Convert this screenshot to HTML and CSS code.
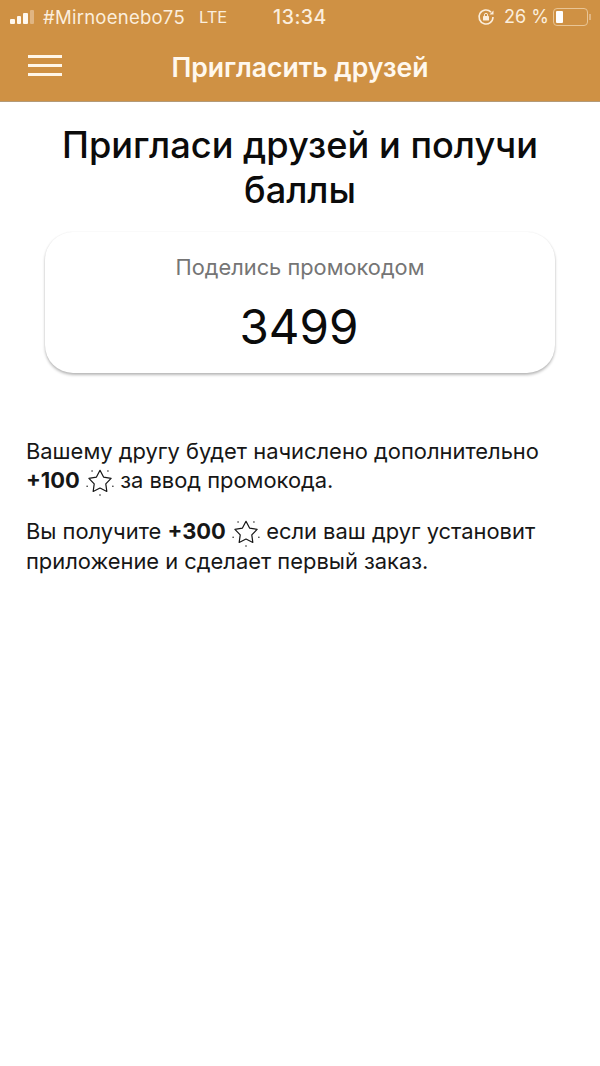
FILE: index.html
```html
<!DOCTYPE html>
<html lang="ru">
<head>
<meta charset="utf-8">
<title>Пригласить друзей</title>
<link rel="stylesheet" href="styles.css">
</head>
<body>
<svg class="defs" width="0" height="0">
  <symbol id="star" viewBox="0 0 30 30">
    <path d="M15 2.500L18.800 9.700 26.900 11.100 21.200 17 22.300 25.100 15 21.500 7.700 25.100 8.800 17 3.100 11.100 11.200 9.700Z" fill="none" stroke="#161616" stroke-width="1.300" stroke-linejoin="round"/>
    <g fill="#161616"><circle cx="23.500" cy="3.300" r=".8"/><circle cx="28.800" cy="19.500" r=".8"/><circle cx="15" cy="29" r=".8"/><circle cx="1.200" cy="19.500" r=".8"/><circle cx="6.500" cy="3.300" r=".8"/></g>
  </symbol>
</svg>
<header class="top">
  <div class="status">
    <div class="status-left">
      <span class="bars"><i class="b1"></i><i class="b2"></i><i class="b3"></i><i class="b4"></i></span>
      <span class="carrier">#Mirnoenebo75</span>
      <span class="lte">LTE</span>
    </div>
    <div class="clock">13:34</div>
    <div class="status-right">
      <svg class="lock" width="18" height="18" viewBox="0 0 18 18" fill="none" stroke="#fbeedd">
        <path d="M16 9a7 7 0 1 1-2-4.900" stroke-width="1.600"/>
        <path d="M16.500 2.500v4h-4z" fill="#fbeedd" stroke="none"/>
        <rect x="6" y="8" width="6" height="4.600" rx=".7" fill="#fbeedd" stroke="none"/>
        <path d="M7.400 8V6.900a1.600 1.600 0 0 1 3.200 0V8" stroke-width="1"/>
      </svg>
      <span class="pct">26 %</span>
      <span class="battery"><i></i></span>
      <span class="nub"></span>
    </div>
  </div>
  <div class="nav">
    <button class="burger" aria-label="Меню"><i></i><i></i><i></i></button>
    <div class="nav-title">Пригласить друзей</div>
  </div>
</header>
<main>
  <h1>Пригласи друзей и получи баллы</h1>
  <section class="card">
    <div class="card-label">Поделись промокодом</div>
    <div class="card-code">3499</div>
  </section>
  <div class="info">
    <p>Вашему другу будет начислено дополнительно<br><b>+100</b> <svg class="star"><use href="#star"/></svg> за ввод промокода.</p>
    <p>Вы получите <b>+300</b> <svg class="star"><use href="#star"/></svg> если ваш друг установит<br>приложение и сделает первый заказ.</p>
  </div>
</main>
</body>
</html>
```
FILE: styles.css
```css
* { box-sizing: border-box; }
html, body { margin: 0; padding: 0; }
body {
  width: 600px;
  height: 1066px;
  background: #fff;
  color: #111;
  font-family: Inter, "Liberation Sans", sans-serif;
  overflow: hidden;
}
.defs { position: absolute; }
.top {
  height: 102px;
  background: #cf9144;
  border-bottom: 1px solid #b39a78;
  color: #fff;
}
.status {
  height: 33px;
  display: grid;
  grid-template-columns: 1fr auto 1fr;
  align-items: center;
  padding: 0 10px;
  color: #fbeedd;
}
.status-left { display: flex; align-items: center; }
.bars { display: flex; align-items: flex-end; gap: 2px; height: 14px; margin-right: 9px; margin-top: 1px; }
.bars i { width: 4.500px; background: #fff8ee; border-radius: 1px; display: block; }
.bars .b1 { height: 5px; }
.bars .b2 { height: 8px; }
.bars .b3 { height: 11px; }
.bars .b4 { height: 14px; background: #e0b582; }
.carrier { font-size: 18.500px; letter-spacing: .25px; }
.lte { font-size: 16.500px; margin-left: 14px; }
.clock { font-size: 19.500px; font-weight: 500; letter-spacing: .5px; }
.status-right { display: flex; align-items: center; justify-content: flex-end; }
.lock { margin-right: 9px; }
.pct { font-size: 18px; margin-right: 4px; }
.battery {
  width: 35px;
  height: 18px;
  border: 1px solid #e9c595;
  border-radius: 4px;
  padding: 2px;
  display: block;
}
.battery i { display: block; width: 7px; height: 100%; background: #fff; border-radius: 1px; }
.nub { width: 2px; height: 6px; background: #e0b582; margin-left: 1px; margin-right: -1px; }
.nav {
  position: relative;
  height: 68px;
  display: flex;
  align-items: center;
  justify-content: center;
}
.burger {
  position: absolute;
  left: 28px;
  top: 22px;
  width: 34px;
  height: 21px;
  padding: 0;
  border: 0;
  background: none;
  display: flex;
  flex-direction: column;
  justify-content: space-between;
}
.burger i { display: block; height: 3px; background: #fff6e8; }
.nav-title { font-size: 26.600px; font-weight: 600; color: #fff8ee; margin-top: -1px; }
h1 {
  margin: 0 auto;
  padding-top: 21px;
  width: 500px;
  text-align: center;
  font-size: 36.200px;
  line-height: 45px;
  font-weight: 500;
  color: #0b0b0b;
}
.card {
  width: 510px;
  height: 141px;
  margin: 19px 0 0 45px;
  background: #fff;
  border-radius: 28px;
  box-shadow: 0 2px 3px rgba(0,0,0,.28), 0 0 2px rgba(0,0,0,.06);
  text-align: center;
  padding-top: 21px;
}
.card-label { font-size: 21.800px; line-height: 28px; color: #757575; }
.card-code { font-size: 47.500px; line-height: 56px; margin: 18px 2px 0 0; color: #0b0b0b; }
.info { padding: 64px 26px 0; font-size: 21.900px; line-height: 29px; color: #161616; }
.info p { margin: 0 0 21px; }
.info b { font-weight: 700; }
.star { width: 28px; height: 28px; vertical-align: -8px; }
```
